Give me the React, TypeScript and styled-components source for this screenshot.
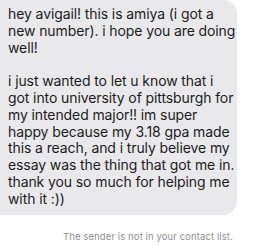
import React from 'react';
import styled, { createGlobalStyle } from 'styled-components';

const GlobalStyle = createGlobalStyle`
  html, body {
    margin: 0;
    padding: 0;
    background: #ffffff;
  }
  body {
    font-family: Inter, 'Liberation Sans', sans-serif;
    -webkit-font-smoothing: antialiased;
  }
`;

const Page = styled.div`
  width: 265px;
  height: 245px;
  overflow: hidden;
  display: flex;
  flex-direction: column;
`;

const Bubble = styled.div`
  margin-left: -4px;
  width: 241px;
  box-sizing: border-box;
  padding: 6px 8px 7px 12px;
  background: #e9e9eb;
  border-radius: 0 14px 14px 0;
  color: #1c1c1e;
  font-size: 14px;
  line-height: 16.8px;
  letter-spacing: -0.1px;
`;

const Line = styled.div`
  white-space: nowrap;
  height: 16.8px;
`;

const Notice = styled.div`
  padding: 16px 0 0 63px;
  font-size: 9.5px;
  color: #8e8e93;
  letter-spacing: 0.1px;
  white-space: nowrap;
`;

const lines = [
  'hey avigail! this is amiya (i got a',
  'new number). i hope you are doing',
  'well!',
  '',
  'i just wanted to let u know that i',
  'got into university of pittsburgh for',
  'my intended major!! im super',
  'happy because my 3.18 gpa made',
  'this a reach, and i truly believe my',
  'essay was the thing that got me in.',
  'thank you so much for helping me',
  'with it :))',
];

const App = () => {
  return (
    <Page>
      <GlobalStyle />
      <Bubble>
        {lines.map((text, i) => (
          <Line key={i}>{text}</Line>
        ))}
      </Bubble>
      <Notice>The sender is not in your contact list.</Notice>
    </Page>
  );
};

export default App;
